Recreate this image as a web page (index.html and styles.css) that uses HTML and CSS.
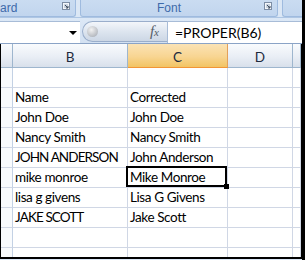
FILE: index.html
```html
<!DOCTYPE html>
<html lang="en">
<head>
<meta charset="UTF-8">
<title>PROPER</title>
<link rel="stylesheet" href="styles.css">
</head>
<body>

<div class="frame">
  <div class="ribbon">
    <div class="group group-clip">
      <span class="label">ard</span>
      <span class="launcher"><svg width="8" height="8" viewBox="0 0 8 8"><rect x="0.5" y="0.5" width="7" height="7" fill="#f4f7fb" stroke="#7d8ea5"/><rect x="2" y="2" width="4" height="4" fill="#c9d3df"/><path d="M3 3 L6 6 M6 4 V6 H4" stroke="#3c4a5c" stroke-width="1" fill="none"/></svg></span>
    </div>
    <div class="group group-font">
      <span class="label">Font</span>
      <span class="launcher"><svg width="8" height="8" viewBox="0 0 8 8"><rect x="0.5" y="0.5" width="7" height="7" fill="#f4f7fb" stroke="#7d8ea5"/><rect x="2" y="2" width="4" height="4" fill="#c9d3df"/><path d="M3 3 L6 6 M6 4 V6 H4" stroke="#3c4a5c" stroke-width="1" fill="none"/></svg></span>
    </div>
    <div class="group group-rest"></div>
  </div>

  <div class="formula-bar">
    <div class="namebox">
      <span class="drop"></span>
    </div>
    <div class="pill">
      <span class="knob"></span>
      <span class="fx">f<span class="fx-x">x</span></span>
    </div>
    <div class="formula">=PROPER(B6)</div>
  </div>

  <div class="sheet">
    <div class="hdr corner"></div>
    <div class="hdr">B</div>
    <div class="hdr active">C</div>
    <div class="hdr">D</div>
    <div class="hdr"></div>

    <div class="rowhdr"></div><div class="cell"></div><div class="cell"></div><div class="cell"></div><div class="cell"></div>
    <div class="rowhdr"></div><div class="cell">Name</div><div class="cell">Corrected</div><div class="cell"></div><div class="cell"></div>
    <div class="rowhdr"></div><div class="cell">John Doe</div><div class="cell">John Doe</div><div class="cell"></div><div class="cell"></div>
    <div class="rowhdr"></div><div class="cell">Nancy Smith</div><div class="cell">Nancy Smith</div><div class="cell"></div><div class="cell"></div>
    <div class="rowhdr"></div><div class="cell caps">JOHN ANDERSON</div><div class="cell">John Anderson</div><div class="cell"></div><div class="cell"></div>
    <div class="rowhdr"></div><div class="cell">mike monroe</div><div class="cell selected">Mike Monroe</div><div class="cell"></div><div class="cell"></div>
    <div class="rowhdr"></div><div class="cell">lisa g givens</div><div class="cell">Lisa G Givens</div><div class="cell"></div><div class="cell"></div>
    <div class="rowhdr"></div><div class="cell caps">JAKE SCOTT</div><div class="cell">Jake Scott</div><div class="cell"></div><div class="cell"></div>
    <div class="rowhdr"></div><div class="cell"></div><div class="cell"></div><div class="cell"></div><div class="cell"></div>
    <div class="rowhdr last"></div><div class="cell last"></div><div class="cell last"></div><div class="cell last"></div><div class="cell last"></div>
  </div>
</div>

</body>
</html>
```

FILE: styles.css
```css
* {
  box-sizing: border-box;
}
body {
  margin: 0;
  background-color: #fff;
  font-family: Lato, "Liberation Sans", sans-serif;
}
.frame {
  width: 305px;
  height: 260px;
  overflow: hidden;
  border-right: 3px solid #000;
  background-color: #dbe7f5;
}

/* ribbon group labels */
.ribbon {
  display: flex;
  height: 18px;
  background-color: #dbe7f5;
  border-bottom: 1px solid #aec6e4;
}
.group {
  display: flex;
  align-items: center;
  height: 17px;
  background: linear-gradient(#cadcf1, #c1d5ee);
  border: 1px solid #9fbbdf;
  border-top: none;
  border-radius: 0 0 3px 3px;
  color: #3e6aaa;
  font-family: "Liberation Sans", Arial, sans-serif;
  font-size: 12px;
}
.group-clip {
  width: 76px;
  margin-right: 4px;
  padding-right: 5px;
  border-left: none;
  border-radius: 0 0 3px 0;
}
.group-font {
  width: 198px;
  padding-left: 76px;
  padding-right: 5px;
  margin-right: 4px;
}
.group-rest {
  flex: 1;
  border-right: none;
  border-radius: 0 0 0 3px;
}
.label {
  flex: 1;
  padding-bottom: 1px;
}
.launcher {
  display: flex;
  padding-bottom: 4px;
}

/* formula bar */
.formula-bar {
  display: flex;
  height: 26px;
  padding-top: 3px;
  background: linear-gradient(#dce8f6, #d3e1f2);
  border-bottom: 1px solid #8aa3c6;
}
.namebox {
  position: relative;
  width: 80px;
  height: 22px;
  background-color: #fff;
  border-top: 1px solid #a8bcd7;
}
.drop {
  position: absolute;
  left: 69px;
  top: 9px;
  width: 0;
  height: 0;
  border-left: 4px solid transparent;
  border-right: 4px solid transparent;
  border-top: 4px solid #000;
}
.pill {
  display: flex;
  align-items: center;
  justify-content: space-between;
  width: 85px;
  height: 21px;
  margin-left: 2px;
  padding: 0 8px 0 4px;
  background: linear-gradient(#f3f6fa, #dde5ef 50%, #ccd7e5);
  border: 1px solid #9aaecb;
  border-right: none;
  border-radius: 11px 0 0 11px;
}
.knob {
  width: 11px;
  height: 11px;
  border-radius: 50%;
  background: radial-gradient(circle at 40% 35%, #f2f2f2, #b8bcc2 70%, #9ea4ac);
}
.fx {
  font-family: "Liberation Serif", "Times New Roman", serif;
  font-style: italic;
  font-size: 15px;
  color: #555c66;
}
.fx-x {
  font-size: 11px;
}
.formula {
  flex: 1;
  height: 22px;
  padding-left: 7px;
  background-color: #fff;
  border-top: 1px solid #a8bcd7;
  border-left: 1px solid #a8bcd7;
  font-size: 14px;
  line-height: 22px;
  color: #000;
}

/* sheet grid */
.sheet {
  display: grid;
  grid-template-columns: 12px 115px 100px 65px 8px;
  grid-template-rows: 24px repeat(9, 20px) 9px;
  border-left: 1px solid #000;
  border-right: 1px solid #000;
  border-bottom: 2px solid #000;
  background-color: #fff;
  font-size: 13.5px;
  color: #000;
}
.hdr {
  display: flex;
  align-items: center;
  justify-content: center;
  padding-top: 2px;
  background: linear-gradient(#f9fbfd, #e9eef5 55%, #d8e0eb);
  border-right: 1px solid #9eb6ce;
  border-bottom: 1px solid #9eb6ce;
  color: #1d2a3d;
}
.hdr.active {
  background: linear-gradient(#fbe3b5, #f8d592 55%, #f2c463);
  border-bottom: 1px solid #f29536;
  border-right: 1px solid #e3a05a;
}
.rowhdr {
  background-color: #f9fbfd;
  border-right: 1px solid #c3d1e4;
  border-bottom: 1px solid #d0d7e5;
}
.cell {
  display: flex;
  align-items: flex-end;
  padding: 0 0 2px 2px;
  border-right: 1px solid #d0d7e5;
  border-bottom: 1px solid #d0d7e5;
  white-space: nowrap;
  line-height: 16px;
  letter-spacing: -0.4px;
}
.caps {
  letter-spacing: -0.9px;
}
.last {
  border-bottom: none;
}
.selected {
  position: relative;
  z-index: 2;
}
.selected::after {
  content: "";
  position: absolute;
  top: -2px;
  left: -2px;
  right: 0;
  bottom: 0;
  border: 2px solid #000;
}
.selected::before {
  content: "";
  position: absolute;
  right: -2px;
  bottom: -2px;
  width: 5px;
  height: 5px;
  background-color: #000;
  z-index: 3;
}
```
